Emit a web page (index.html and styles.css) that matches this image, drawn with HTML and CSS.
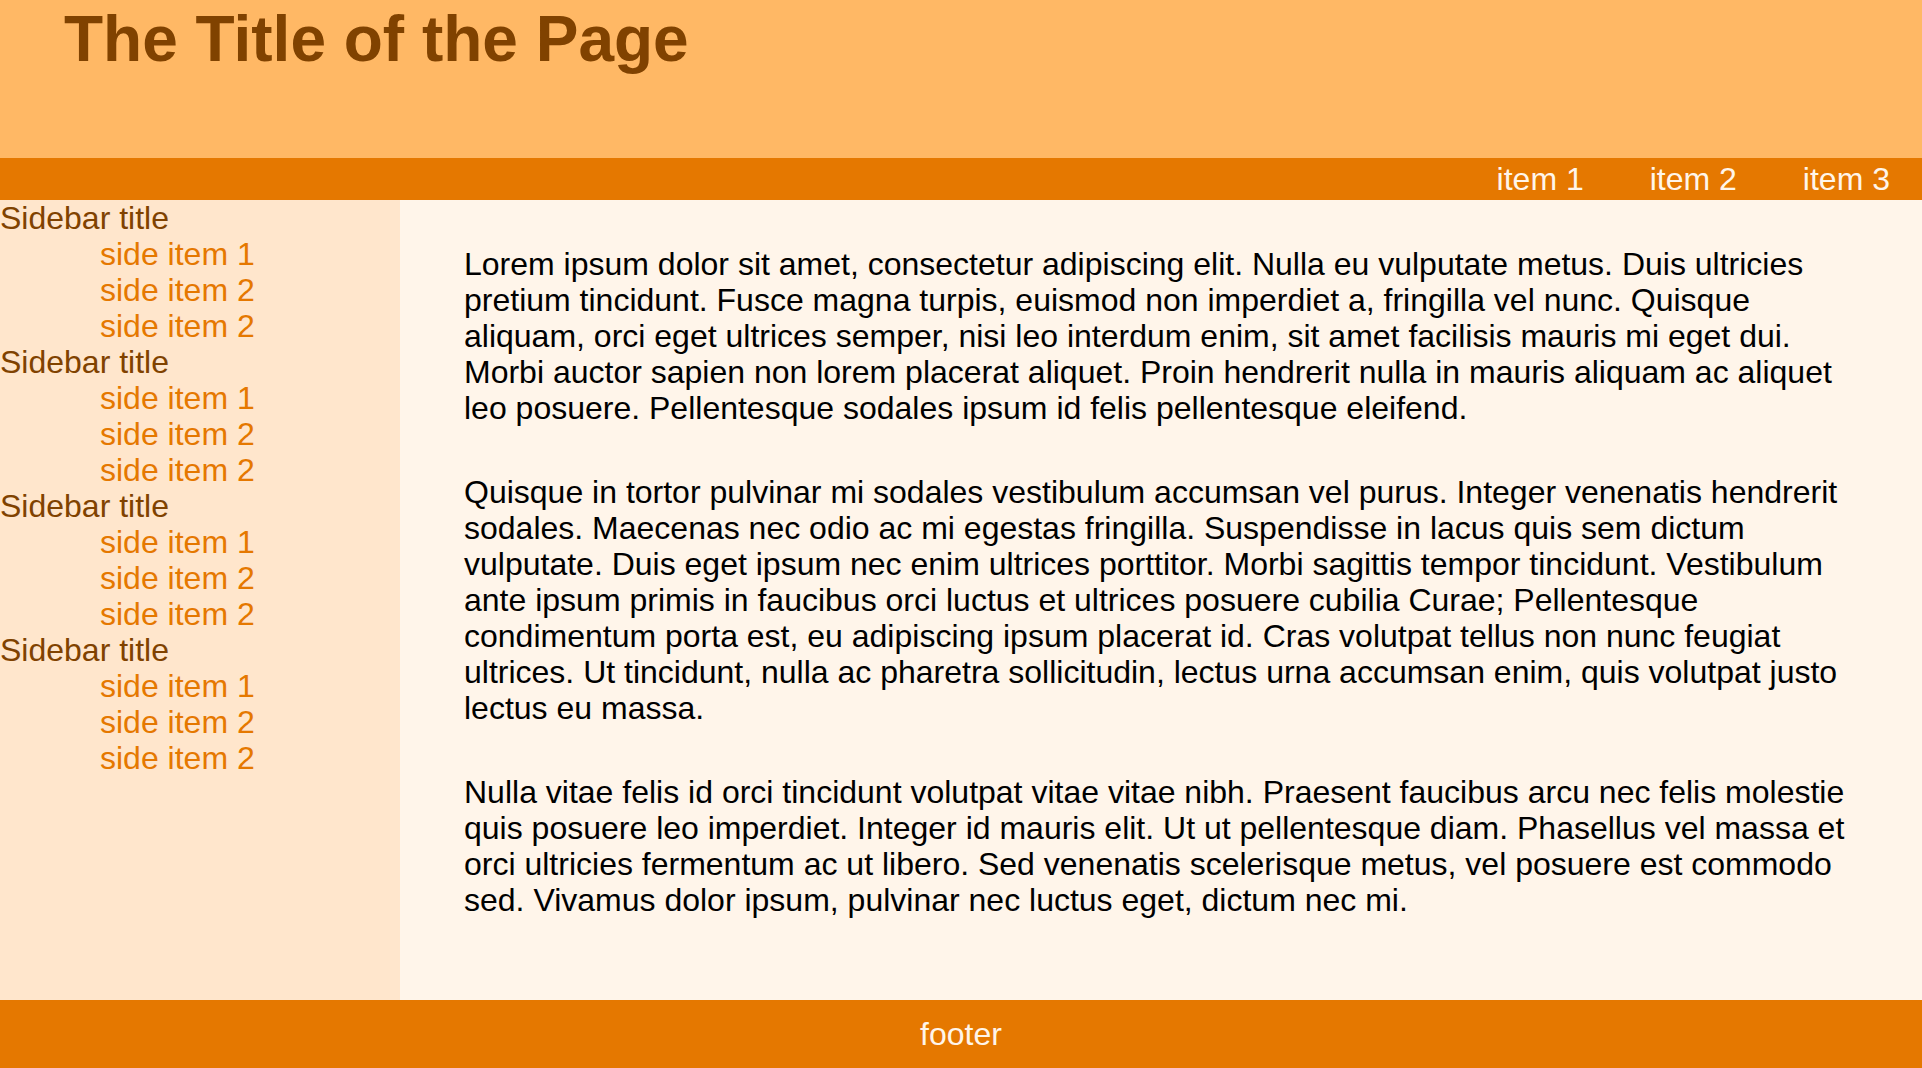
FILE: index.html
```html
<!DOCTYPE html>
<html>
<head>
<meta charset="utf-8">
<title>The Title of the Page</title>
<link rel="stylesheet" href="styles.css">
</head>
<body>
<div class="page">
  <header class="header">
    <h1 class="title">The Title of the Page</h1>
  </header>
  <nav class="nav">
    <ul class="nav-list">
      <li class="nav-item">item 1</li>
      <li class="nav-item">item 2</li>
      <li class="nav-item">item 3</li>
    </ul>
  </nav>
  <div class="body">
    <aside class="sidebar">
      <div class="side-group">
        <div class="side-title">Sidebar title</div>
        <ul class="side-list">
          <li>side item 1</li>
          <li>side item 2</li>
          <li>side item 2</li>
        </ul>
      </div>
      <div class="side-group">
        <div class="side-title">Sidebar title</div>
        <ul class="side-list">
          <li>side item 1</li>
          <li>side item 2</li>
          <li>side item 2</li>
        </ul>
      </div>
      <div class="side-group">
        <div class="side-title">Sidebar title</div>
        <ul class="side-list">
          <li>side item 1</li>
          <li>side item 2</li>
          <li>side item 2</li>
        </ul>
      </div>
      <div class="side-group">
        <div class="side-title">Sidebar title</div>
        <ul class="side-list">
          <li>side item 1</li>
          <li>side item 2</li>
          <li>side item 2</li>
        </ul>
      </div>
    </aside>
    <main class="main">
      <p class="para">Lorem ipsum dolor sit amet, consectetur adipiscing elit. Nulla eu vulputate metus. Duis ultricies pretium tincidunt. Fusce magna turpis, euismod non imperdiet a, fringilla vel nunc. Quisque aliquam, orci eget ultrices semper, nisi leo interdum enim, sit amet facilisis mauris mi eget dui. Morbi auctor sapien non lorem placerat aliquet. Proin hendrerit nulla in mauris aliquam ac aliquet leo posuere. Pellentesque sodales ipsum id felis pellentesque eleifend.</p>
      <p class="para">Quisque in tortor pulvinar mi sodales vestibulum accumsan vel purus. Integer venenatis hendrerit sodales. Maecenas nec odio ac mi egestas fringilla. Suspendisse in lacus quis sem dictum vulputate. Duis eget ipsum nec enim ultrices porttitor. Morbi sagittis tempor tincidunt. Vestibulum ante ipsum primis in faucibus orci luctus et ultrices posuere cubilia Curae; Pellentesque condimentum porta est, eu adipiscing ipsum placerat id. Cras volutpat tellus non nunc feugiat ultrices. Ut tincidunt, nulla ac pharetra sollicitudin, lectus urna accumsan enim, quis volutpat justo lectus eu massa.</p>
      <p class="para">Nulla vitae felis id orci tincidunt volutpat vitae vitae nibh. Praesent faucibus arcu nec felis molestie quis posuere leo imperdiet. Integer id mauris elit. Ut ut pellentesque diam. Phasellus vel massa et orci ultricies fermentum ac ut libero. Sed venenatis scelerisque metus, vel posuere est commodo sed. Vivamus dolor ipsum, pulvinar nec luctus eget, dictum nec mi.</p>
    </main>
  </div>
  <footer class="footer">footer</footer>
</div>
</body>
</html>
```
FILE: styles.css
```css
html, body {
  margin: 0;
  padding: 0;
}
body {
  font-family: "Liberation Sans", Arial, Helvetica, sans-serif;
  font-size: 32px;
  line-height: 36px;
  color: #000;
  background: #fff5ea;
}
.page {
  display: flex;
  flex-direction: column;
  width: 1922px;
  height: 1068px;
}
.header {
  height: 158px;
  background: #ffb865;
}
.title {
  margin: 0;
  padding: 2px 64px 0;
  font-size: 64px;
  line-height: 74px;
  font-weight: bold;
  color: #804200;
}
.nav {
  height: 42px;
  background: #e57800;
}
.nav-list {
  list-style: none;
  margin: 0;
  padding: 0 32px 0 0;
  display: flex;
  justify-content: flex-end;
  gap: 66px;
}
.nav-item {
  color: #fff5ea;
  line-height: 42px;
}
.body {
  display: flex;
  height: 800px;
}
.sidebar {
  width: 400px;
  flex: none;
  background: #ffe6cc;
}
.side-title {
  color: #804200;
}
.side-list {
  list-style: none;
  margin: 0;
  padding: 0 0 0 100px;
  color: #e57800;
}
.main {
  flex: 1;
  padding: 0 64px;
  background: #fff5ea;
}
.para {
  margin: 48px 0;
}
.para:first-child {
  margin-top: 46px;
}
.footer {
  height: 68px;
  background: #e57800;
  color: #fff5ea;
  text-align: center;
  line-height: 68px;
}
```
